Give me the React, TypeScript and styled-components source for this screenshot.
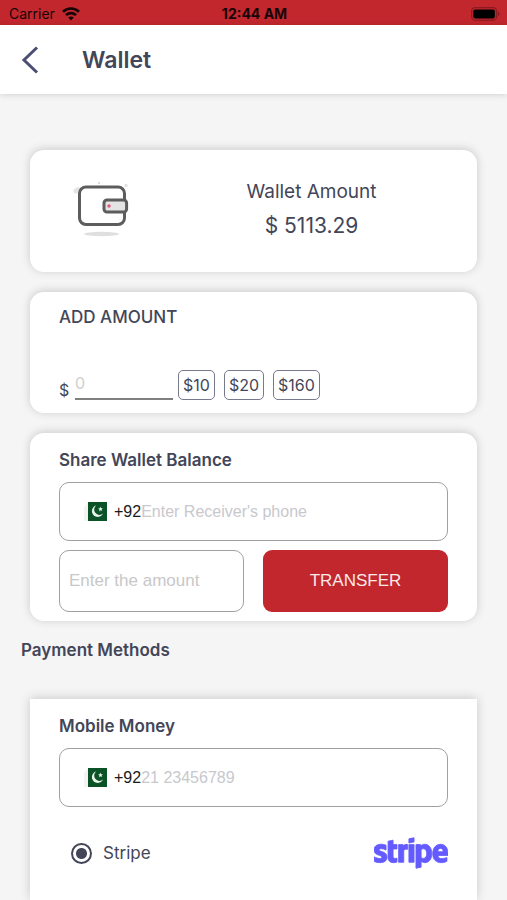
import React, { useState } from "react";
import styled, { createGlobalStyle } from "styled-components";
import { FaStripe } from "react-icons/fa";

const ink = "#434658";
const brand = "#c1272d";
const ui = `Inter, "Liberation Sans", sans-serif`;
const plain = `"Liberation Sans", Arial, sans-serif`;

const GlobalStyle = createGlobalStyle`
  * { box-sizing: border-box; }
  body { margin: 0; background: #f5f5f5; color: ${ink}; font-family: ${ui}; }
  h1, h2, p { margin: 0; }
  input, button { font: inherit; color: inherit; }
`;

const Page = styled.div`
  min-height: 100vh;
  display: flex;
  flex-direction: column;
  overflow-x: hidden;
`;

const StatusBar = styled.div`
  display: grid;
  grid-template-columns: 1fr auto 1fr;
  align-items: center;
  height: 25px;
  padding: 2px 7px 0 9px;
  background: ${brand};
  color: #170406;
  font-size: 14px;
  line-height: 20px;
`;

const Carrier = styled.span`
  display: flex;
  align-items: center;
  gap: 7px;
`;

const Clock = styled.span`
  font-weight: 700;
`;

const BatterySlot = styled.span`
  display: flex;
  justify-content: flex-end;
`;

const TitleBar = styled.header`
  display: flex;
  align-items: center;
  gap: 42px;
  height: 69px;
  padding: 0 20px;
  background: #fff;
  box-shadow: 0 1px 6px rgba(0, 0, 0, 0.14);
`;

const BackButton = styled.button`
  display: flex;
  padding: 0;
  border: 0;
  background: none;
  color: #4c4e73;
  cursor: pointer;
`;

const Title = styled.h1`
  font-size: 23px;
  line-height: 28px;
  font-weight: 600;
`;

const Main = styled.main`
  flex: 1;
  display: flex;
  flex-direction: column;
  padding-top: 56px;
`;

const Stack = styled.div`
  display: flex;
  flex-direction: column;
  gap: 20px;
  padding: 0 30px;
`;

const Card = styled.section<{ $square?: boolean }>`
  padding: 17px 29px 9px;
  border-radius: ${(p) => (p.$square ? "0" : "14px")};
  background: #fff;
  box-shadow: 0 -1px 10px rgba(0, 0, 0, 0.18);
`;

const BalanceCard = styled(Card)`
  display: flex;
  padding: 28px 29px;
`;

const AddCard = styled(Card)`
  padding-top: 15px;
  padding-bottom: 13px;
`;

const IconSlot = styled.div`
  width: 116px;
  padding-left: 13px;
`;

const Balance = styled.div`
  flex: 1;
  text-align: center;
`;

const BalanceLabel = styled.p`
  font-size: 19px;
  line-height: 28px;
`;

const BalanceValue = styled.p`
  margin-top: 4px;
  font-size: 21px;
  line-height: 32px;
`;

const Heading = styled.h2`
  font-size: 17px;
  line-height: 20px;
  font-weight: 600;
`;

const AddHeading = styled(Heading)`
  font-weight: 500;
`;

const SectionHeading = styled(Heading)`
  margin: 19px 21px 39px;
`;

const AmountRow = styled.div`
  display: flex;
  align-items: flex-end;
  margin-top: 43px;
`;

const AmountLabel = styled.label`
  width: 16px;
  font-size: 16px;
  line-height: 20px;
`;

const AmountInput = styled.input`
  width: 98px;
  height: 30px;
  margin-right: 5px;
  padding: 0 0 2px;
  border: 0;
  border-bottom: 2px solid #808080;
  background: none;
  font-size: 16px;
  outline: none;
  &::placeholder { color: #cfcfcf; opacity: 1; }
`;

const Presets = styled.div`
  display: flex;
  gap: 9px;
`;

const PresetButton = styled.button`
  height: 30px;
  padding: 0 4px;
  border: 1px solid #77798c;
  border-radius: 5px;
  background: #fff;
  font-size: 16px;
  cursor: pointer;
`;

const PhoneField = styled.label`
  display: flex;
  align-items: center;
  height: 59px;
  margin-top: 12px;
  padding: 0 24px;
  border: 1px solid #a0a0a0;
  border-radius: 10px;
  font-family: ${plain};
  font-size: 16px;
`;

const DialCode = styled.span`
  margin-left: 7px;
  color: #1a1a1a;
`;

const PhoneInput = styled.input`
  flex: 1;
  min-width: 0;
  padding: 0;
  border: 0;
  background: none;
  outline: none;
  &::placeholder { color: #c8c8cd; opacity: 1; }
`;

const TransferRow = styled.div`
  display: grid;
  grid-template-columns: 1fr 1fr;
  gap: 19px;
  margin-top: 9px;
`;

const TransferInput = styled.input`
  min-width: 0;
  height: 62px;
  padding: 0 9px;
  border: 1px solid #a0a0a0;
  border-radius: 10px;
  background: #fff;
  font-family: ${plain};
  font-size: 17px;
  outline: none;
  &::placeholder { color: #c8c8c8; opacity: 1; }
`;

const TransferButton = styled.button`
  height: 62px;
  border: 0;
  border-radius: 9px;
  background: ${brand};
  color: #fbe9e9;
  font-family: ${plain};
  font-size: 17px;
  cursor: pointer;
`;

const MethodRow = styled.div`
  display: flex;
  align-items: center;
  justify-content: space-between;
  margin-top: 16px;
  padding-left: 12px;
`;

const MethodLabel = styled.label`
  display: flex;
  align-items: center;
  gap: 11px;
  font-size: 17px;
`;

const Radio = styled.input`
  appearance: none;
  width: 21px;
  height: 21px;
  margin: 0;
  border: 2px solid ${ink};
  border-radius: 50%;
  background: #fff;
  &:checked { background: radial-gradient(circle, ${ink} 5px, #fff 6px); }
`;

const MethodCard = styled(Card)`
  flex: 1;
  margin: 0 30px;
`;

const StripeLogo = styled(FaStripe)`
  width: 74px;
  height: 60px;
  color: #635bff;
  stroke: currentColor;
  stroke-width: 7px;
`;

function WifiIcon() {
  return (
    <svg width="18" height="14" viewBox="0 0 18 14" fill="none" stroke="currentColor" strokeWidth="2.6" aria-hidden="true">
      <path d="M1 4.8C5.5.4 12.5.4 17 4.8" />
      <path d="M4 8.1c2.8-2.7 7.2-2.7 10 0" />
      <path d="M9 13.4 6.2 10.5c1.6-1.5 4-1.5 5.6 0Z" fill="currentColor" stroke="none" />
    </svg>
  );
}

function BatteryIcon() {
  return (
    <svg width="29" height="14" viewBox="0 0 29 14" aria-hidden="true">
      <rect x=".6" y=".6" width="25" height="12.6" rx="3.6" fill="none" stroke="#8d1a20" strokeWidth="1.2" />
      <rect x="2.3" y="2.4" width="21.6" height="9" rx="1.8" fill="#000" />
      <path d="M27 4.8c2 .6 2 3.8 0 4.4Z" fill="#8d1a20" />
    </svg>
  );
}

function BackIcon() {
  return (
    <svg width="20" height="28" viewBox="0 0 20 28" fill="none" stroke="currentColor" strokeWidth="3" aria-hidden="true">
      <path d="M17 1.5 4 14l13 12.5" />
    </svg>
  );
}

function WalletIcon() {
  return (
    <svg width="60" height="62" viewBox="0 0 60 62" aria-hidden="true">
      <path d="M1 12.5 5 9l4 1-3 5-3 .5Z" fill="#e4e4e4" />
      <circle cx="27" cy="5" r="1.2" fill="#ddd" />
      <circle cx="54" cy="7.5" r="1.7" fill="#e2e2e2" />
      <ellipse cx="29.5" cy="56" rx="17.5" ry="2.2" fill="#dfdfdf" />
      <rect x="7.5" y="9" width="45" height="37.5" rx="6.5" fill="#fff" stroke="#5d5d5d" strokeWidth="3" />
      <rect x="32" y="22" width="22.6" height="12" rx="3" fill="#e4e4e4" stroke="#5d5d5d" strokeWidth="3" />
      <circle cx="37" cy="28" r="1.8" fill="#df5d80" />
    </svg>
  );
}

function FlagIcon() {
  return (
    <svg width="23" height="19" viewBox="0 0 23 19" aria-hidden="true">
      <path d="M0 5 4 0v19H0Z" fill="#f4f4f4" />
      <rect x="4" width="19" height="19" fill="#0b5227" />
      <path d="M12 3.6A5.8 5.8 0 1 0 19 11.6 5 5 0 0 1 12 3.6Z" fill="#eaf5ea" />
      <path d="m16.2 4.6.8 1.6 1.8-.1-1.2 1.3.6 1.7-1.6-.8-1.4 1.1.3-1.8-1.5-.9 1.7-.4Z" fill="#eaf5ea" />
    </svg>
  );
}

function PhoneBox({ name, placeholder }: { name: string; placeholder: string }) {
  return (
    <PhoneField>
      <FlagIcon />
      <DialCode>+92</DialCode>
      <PhoneInput type="tel" aria-label={name} placeholder={placeholder} />
    </PhoneField>
  );
}

export default function App() {
  const [amount, setAmount] = useState("");
  return (
    <Page>
      <GlobalStyle />
      <StatusBar>
        <Carrier>Carrier <WifiIcon /></Carrier>
        <Clock>12:44 AM</Clock>
        <BatterySlot><BatteryIcon /></BatterySlot>
      </StatusBar>
      <TitleBar>
        <BackButton type="button" aria-label="Back"><BackIcon /></BackButton>
        <Title>Wallet</Title>
      </TitleBar>
      <Main>
        <Stack>
          <BalanceCard>
            <IconSlot><WalletIcon /></IconSlot>
            <Balance>
              <BalanceLabel>Wallet Amount</BalanceLabel>
              <BalanceValue>$ 5113.29</BalanceValue>
            </Balance>
          </BalanceCard>
          <AddCard>
            <AddHeading>ADD AMOUNT</AddHeading>
            <AmountRow>
              <AmountLabel htmlFor="amount">$</AmountLabel>
              <AmountInput id="amount" inputMode="decimal" placeholder="0" value={amount} onChange={(e) => setAmount(e.target.value)} />
              <Presets>
                {["10", "20", "160"].map((v) => (
                  <PresetButton key={v} type="button" onClick={() => setAmount(v)}>{`$${v}`}</PresetButton>
                ))}
              </Presets>
            </AmountRow>
          </AddCard>
          <Card>
            <Heading>Share Wallet Balance</Heading>
            <PhoneBox name="Receiver's phone" placeholder="Enter Receiver's phone" />
            <TransferRow>
              <TransferInput aria-label="Amount to transfer" inputMode="decimal" placeholder="Enter the amount" />
              <TransferButton type="button">TRANSFER</TransferButton>
            </TransferRow>
          </Card>
        </Stack>
        <SectionHeading>Payment Methods</SectionHeading>
        <MethodCard $square>
          <Heading>Mobile Money</Heading>
          <PhoneBox name="Mobile money number" placeholder="21 23456789" />
          <MethodRow>
            <MethodLabel>
              <Radio type="radio" name="method" value="stripe" defaultChecked />
              Stripe
            </MethodLabel>
            <StripeLogo aria-label="stripe" />
          </MethodRow>
        </MethodCard>
      </Main>
    </Page>
  );
}
